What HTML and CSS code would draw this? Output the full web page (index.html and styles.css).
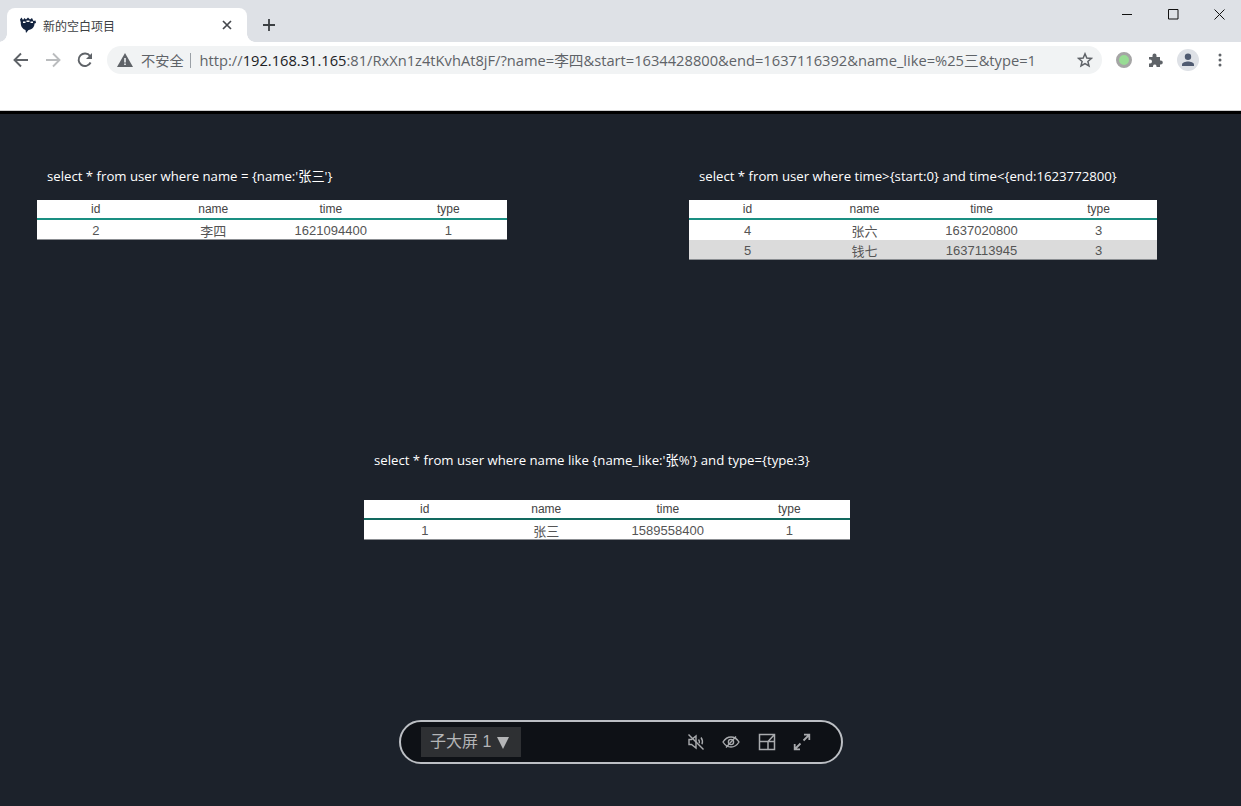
FILE: index.html
```html
<!doctype html>
<html lang="zh">
<head>
	<meta charset="utf-8">
	<title>新的空白项目</title>
	<link rel="stylesheet" href="styles.css">
</head>
<body>

<div class="tabstrip">
	<div class="tab">
		<svg class="tab-icon" width="18" height="18" viewBox="0 0 18 18">
			<path fill="#13233f" d="M1 3.500 2.500 1.500 4 4 5.500 2 7 3.500 9 1.500 11 3.500 13 2 14.500 5 16.500 4.500 17 7 15.500 7.500C15.500 11 13 13.500 9.500 14L7 17 6.500 14C3.500 13 1.500 10 1.800 6.500z"/>
			<path fill="#fff" d="M4 5.500h2.500v1.500H4zM7.500 4.500h3v1.500h-3zM11.500 5.500h2.500v1.500h-2.500z"/>
		</svg>
		<span class="tab-title">新的空白项目</span>
		<svg class="tab-close" width="10" height="10" viewBox="0 0 10 10">
			<path d="M1 1l8 8M9 1 1 9" stroke="#45484d" stroke-width="1.700"/>
		</svg>
	</div>
	<svg class="new-tab" width="12" height="12" viewBox="0 0 12 12">
		<path d="M6 0v12M0 6h12" stroke="#3c4043" stroke-width="1.800"/>
	</svg>
	<div class="window-controls">
		<svg width="11" height="11" viewBox="0 0 11 11"><path d="M0 5.500h10" stroke="#111" stroke-width="1"/></svg>
		<svg width="11" height="11" viewBox="0 0 11 11"><path d="M.5.5h9.500v9.500H.5z" fill="none" stroke="#111" stroke-width="1"/></svg>
		<svg width="11" height="11" viewBox="0 0 11 11"><path d="M.5.500l10 10M10.500.500l-10 10" stroke="#111" stroke-width="1"/></svg>
	</div>
</div>

<div class="toolbar">
	<svg class="nav-btn" width="16" height="16" viewBox="0 0 16 16">
		<path d="M15 8H2M8 1.500 1.500 8 8 14.500" fill="none" stroke="#5f6368" stroke-width="1.900"/>
	</svg>
	<svg class="nav-btn" width="16" height="16" viewBox="0 0 16 16">
		<path d="M1 8h13M8 1.500 14.500 8 8 14.500" fill="none" stroke="#babcbe" stroke-width="1.900"/>
	</svg>
	<svg class="nav-btn" width="16" height="16" viewBox="0 0 16 16">
		<path d="M13.600 10.500A6.300 6.300 0 1 1 13 4" fill="none" stroke="#5f6368" stroke-width="1.900"/>
		<path d="M15 1v6H9z" fill="#5f6368"/>
	</svg>
	<div class="omnibox">
		<svg class="warn-icon" width="16" height="14" viewBox="0 0 16 14">
			<path fill="#5f6368" d="M8 0l8 14H0z"/>
			<path fill="#f1f3f4" d="M7.200 5h1.600v4.500H7.200zM7.200 10.500h1.600V12H7.200z"/>
		</svg>
		<span class="not-secure">不安全</span>
		<span class="url"><span class="url-dim">http://</span>192.168.31.165<span class="url-dim">:81/RxXn1z4tKvhAt8jF/?name=李四&amp;start=1634428800&amp;end=1637116392&amp;name_like=%25三&amp;type=1</span></span>
		<svg class="star-icon" width="16" height="16" viewBox="0 0 16 16">
			<path d="M8 1.800 9.800 6l4.600.4-3.500 3 1.100 4.500L8 11.500l-4 2.400 1.100-4.500-3.500-3L6.200 6z" fill="none" stroke="#5f6368" stroke-width="1.500"/>
		</svg>
	</div>
	<div class="ext-icons">
		<span class="ext-dot"></span>
		<svg width="16" height="16" viewBox="0 0 16 16">
			<path fill="#5f6368" d="M1 5h3.500V3.500a2 2 0 0 1 4 0V5H12v3.500h.800a2 2 0 0 1 0 4H12V15H8.500v-1a1.800 1.800 0 0 0-3.500 0v1H1v-3.500h1a2 2 0 0 0 0-4H1z"/>
		</svg>
		<span class="avatar">
			<svg width="14" height="14" viewBox="0 0 14 14">
				<circle cx="7" cy="3.700" r="3.200" fill="#4f5a70"/>
				<path fill="#4f5a70" d="M1 13v-1.500C1 9.500 4.500 8.500 7 8.500s6 1 6 3V13z"/>
			</svg>
		</span>
		<svg width="4" height="14" viewBox="0 0 4 14">
			<circle cx="2" cy="2" r="1.500" fill="#5f6368"/>
			<circle cx="2" cy="7" r="1.500" fill="#5f6368"/>
			<circle cx="2" cy="12" r="1.500" fill="#5f6368"/>
		</svg>
	</div>
</div>
<div class="bookmark-gap"></div>

<div class="screen">
	<div class="top-row">
		<section class="panel">
			<p class="sql">select * from user where name = {name:'张三'}</p>
			<table class="grid">
				<thead><tr><th>id</th><th>name</th><th>time</th><th>type</th></tr></thead>
				<tbody>
					<tr><td>2</td><td>李四</td><td>1621094400</td><td>1</td></tr>
				</tbody>
			</table>
		</section>
		<section class="panel">
			<p class="sql">select * from user where time&gt;{start:0} and time&lt;{end:1623772800}</p>
			<table class="grid">
				<thead><tr><th>id</th><th>name</th><th>time</th><th>type</th></tr></thead>
				<tbody>
					<tr><td>4</td><td>张六</td><td>1637020800</td><td>3</td></tr>
					<tr class="alt"><td>5</td><td>钱七</td><td>1637113945</td><td>3</td></tr>
				</tbody>
			</table>
		</section>
	</div>

	<section class="panel panel-wide">
		<p class="sql sql-wide">select * from user where name like {name_like:'张%'} and type={type:3}</p>
		<table class="grid">
			<thead><tr><th>id</th><th>name</th><th>time</th><th>type</th></tr></thead>
			<tbody>
				<tr><td>1</td><td>张三</td><td>1589558400</td><td>1</td></tr>
			</tbody>
		</table>
	</section>

	<div class="dock">
		<div class="screen-select">子大屏 1 <span class="caret"></span></div>
		<div class="dock-icons">
			<svg width="18" height="18" viewBox="0 0 18 18" fill="none" stroke="#a9abae" stroke-width="1.400">
				<path d="M2 6.500v5h2.500L9 15V3L4.500 6.500z"/>
				<path d="M11.500 6.500c1 1.200 1.200 2.500.8 3.800M14 4.500c1.500 2 1.800 4.500 1 6.800"/>
				<path d="M1.500 1.500l15 15"/>
			</svg>
			<svg width="18" height="18" viewBox="0 0 18 18" fill="none" stroke="#a9abae" stroke-width="1.400">
				<path d="M1 9c2-3.200 5-5 8-5s6 1.800 8 5c-2 3.200-5 5-8 5s-6-1.800-8-5z"/>
				<circle cx="9" cy="9" r="2.600"/>
				<path d="M4 14.500 14 3.500"/>
			</svg>
			<svg width="18" height="18" viewBox="0 0 18 18" fill="none" stroke="#a9abae" stroke-width="1.500">
				<path d="M1.500 1.500h15v15h-15zM1.500 8.500h15M10 8.500v8M10 8.500l6.500-7"/>
			</svg>
			<svg width="18" height="18" viewBox="0 0 18 18" fill="none" stroke="#a9abae" stroke-width="1.800">
				<path d="M10.500 7.500 16 2M11 1.700h5.300V7M7.500 10.500 2 16M7 16.300H1.700V11"/>
			</svg>
		</div>
	</div>
</div>

</body>
</html>
```

FILE: styles.css
```css
html, body {
    margin: 0;
    height: 100%;
    overflow: hidden;
}

body {
    display: flex;
    flex-direction: column;
    font-family: "Liberation Sans", "Noto Sans CJK SC", sans-serif;
}

/* browser frame */
.tabstrip {
    height: 42px;
    background: #dee1e6;
    display: flex;
    align-items: flex-end;
    padding-left: 7px;
    flex: none;
}

.tab {
    position: relative;
    width: 240px;
    height: 34px;
    box-sizing: border-box;
    background: #fff;
    border-radius: 8px 8px 0 0;
    display: flex;
    align-items: center;
    padding: 0 15px 0 12px;
    margin-top: 8px;
}

.tab::before,
.tab::after {
    content: "";
    position: absolute;
    bottom: 0;
    width: 8px;
    height: 8px;
}

.tab::before {
    left: -8px;
    background: radial-gradient(circle at 0 0, transparent 7.500px, #fff 8px);
}

.tab::after {
    right: -8px;
    background: radial-gradient(circle at 100% 0, transparent 7.500px, #fff 8px);
}

.tab-icon {
    margin-right: 6px;
}

.tab-title {
    flex: 1;
    font-size: 12px;
    color: #3c4043;
}

.new-tab {
    margin: 0 0 11px 16px;
}

.window-controls {
    margin-left: auto;
    align-self: flex-start;
    display: flex;
    gap: 35px;
    padding: 9px 16px 0 0;
}

.toolbar {
    height: 36px;
    box-sizing: border-box;
    background: #fff;
    display: flex;
    align-items: center;
    padding: 0 13px;
    flex: none;
}

.nav-btn {
    margin-right: 16px;
}

.omnibox {
    width: 995px;
    height: 28px;
    margin-left: -2px;
    background: #f1f3f4;
    border-radius: 14px;
    display: flex;
    align-items: center;
    padding-left: 10px;
    box-sizing: border-box;
    font-family: "Open Sans", "Noto Sans CJK SC", sans-serif;
    font-size: 14.680px;
    white-space: nowrap;
}

.warn-icon {
    margin-right: 8px;
}

.not-secure {
    color: #5f6368;
    font-size: 14.200px;
    padding-right: 6px;
    border-right: 1px solid #9aa0a6;
    line-height: 15px;
    margin-right: 9px;
}

.url {
    color: #202124;
    flex: 1;
    padding-bottom: 2px;
}

.url-dim {
    color: #5f6368;
}

.star-icon {
    margin-right: 9px;
}

.ext-icons {
    display: flex;
    align-items: center;
    margin-left: 14px;
}

.ext-dot {
    width: 10px;
    height: 10px;
    border: 3.500px solid #a5a5a5;
    background: #98dc94;
    border-radius: 50%;
    margin-right: 16px;
}

.avatar {
    width: 22px;
    height: 22px;
    margin: 0 19px 0 13px;
    background: #dee1e6;
    border-radius: 50%;
    display: flex;
    align-items: center;
    justify-content: center;
}

.bookmark-gap {
    height: 32px;
    background: #fff;
    border-bottom: 1px solid #ccc;
    flex: none;
}

/* big screen */
.screen {
    flex: 1;
    background: #1c222b;
    border-top: 3px solid #000;
    position: relative;
}

.top-row {
    display: flex;
    gap: 182px;
    padding: 52px 0 0 37px;
}

.panel {
    width: 470px;
}

.panel + .panel {
    width: 468px;
}

.panel-wide {
    width: 486px;
    margin: 0 0 0 364px;
    padding-top: 190px;
}

.sql {
    margin: 0 0 14px 10px;
    height: 20px;
    line-height: 20px;
    font-family: "Open Sans", "Noto Sans CJK SC", sans-serif;
    font-size: 13.200px;
    color: #fff;
    white-space: nowrap;
}

.sql-wide {
    margin-bottom: 30px;
}

.grid {
    width: 100%;
    table-layout: fixed;
    border-collapse: collapse;
    background: #fff;
    text-align: center;
    color: #555;
}

.grid th {
    height: 19px;
    box-sizing: border-box;
    padding: 0;
    font-size: 12px;
    font-weight: normal;
    color: #444;
    border-bottom: 2px solid #1a8f82;
}

.panel-wide .grid th {
    border-bottom-color: #12695f;
}

.grid td {
    height: 20px;
    padding: 0;
    font-size: 13px;
}

.grid tbody tr:last-child td {
    box-shadow: inset 0 -1px #8b8e92;
}

.grid .alt td {
    background: #dbdbdb;
}

.dock {
    position: absolute;
    left: 399px;
    top: 606px;
    width: 444px;
    height: 44px;
    box-sizing: border-box;
    background: #0e1116;
    border: 2px solid #bcbfc4;
    border-radius: 22px;
    display: flex;
    align-items: center;
    padding: 0 30px 0 20px;
}

.screen-select {
    width: 100px;
    height: 30px;
    box-sizing: border-box;
    background: #2e3033;
    color: #b4b5b7;
    font-size: 16px;
    line-height: 30px;
    padding-left: 9px;
    white-space: nowrap;
}

.caret {
    display: inline-block;
    width: 0;
    height: 0;
    margin-left: 1px;
    vertical-align: -2px;
    border-left: 6.500px solid transparent;
    border-right: 6.500px solid transparent;
    border-top: 12px solid #b4b5b7;
}

.dock-icons {
    margin-left: auto;
    display: flex;
    gap: 17.500px;
}
```
